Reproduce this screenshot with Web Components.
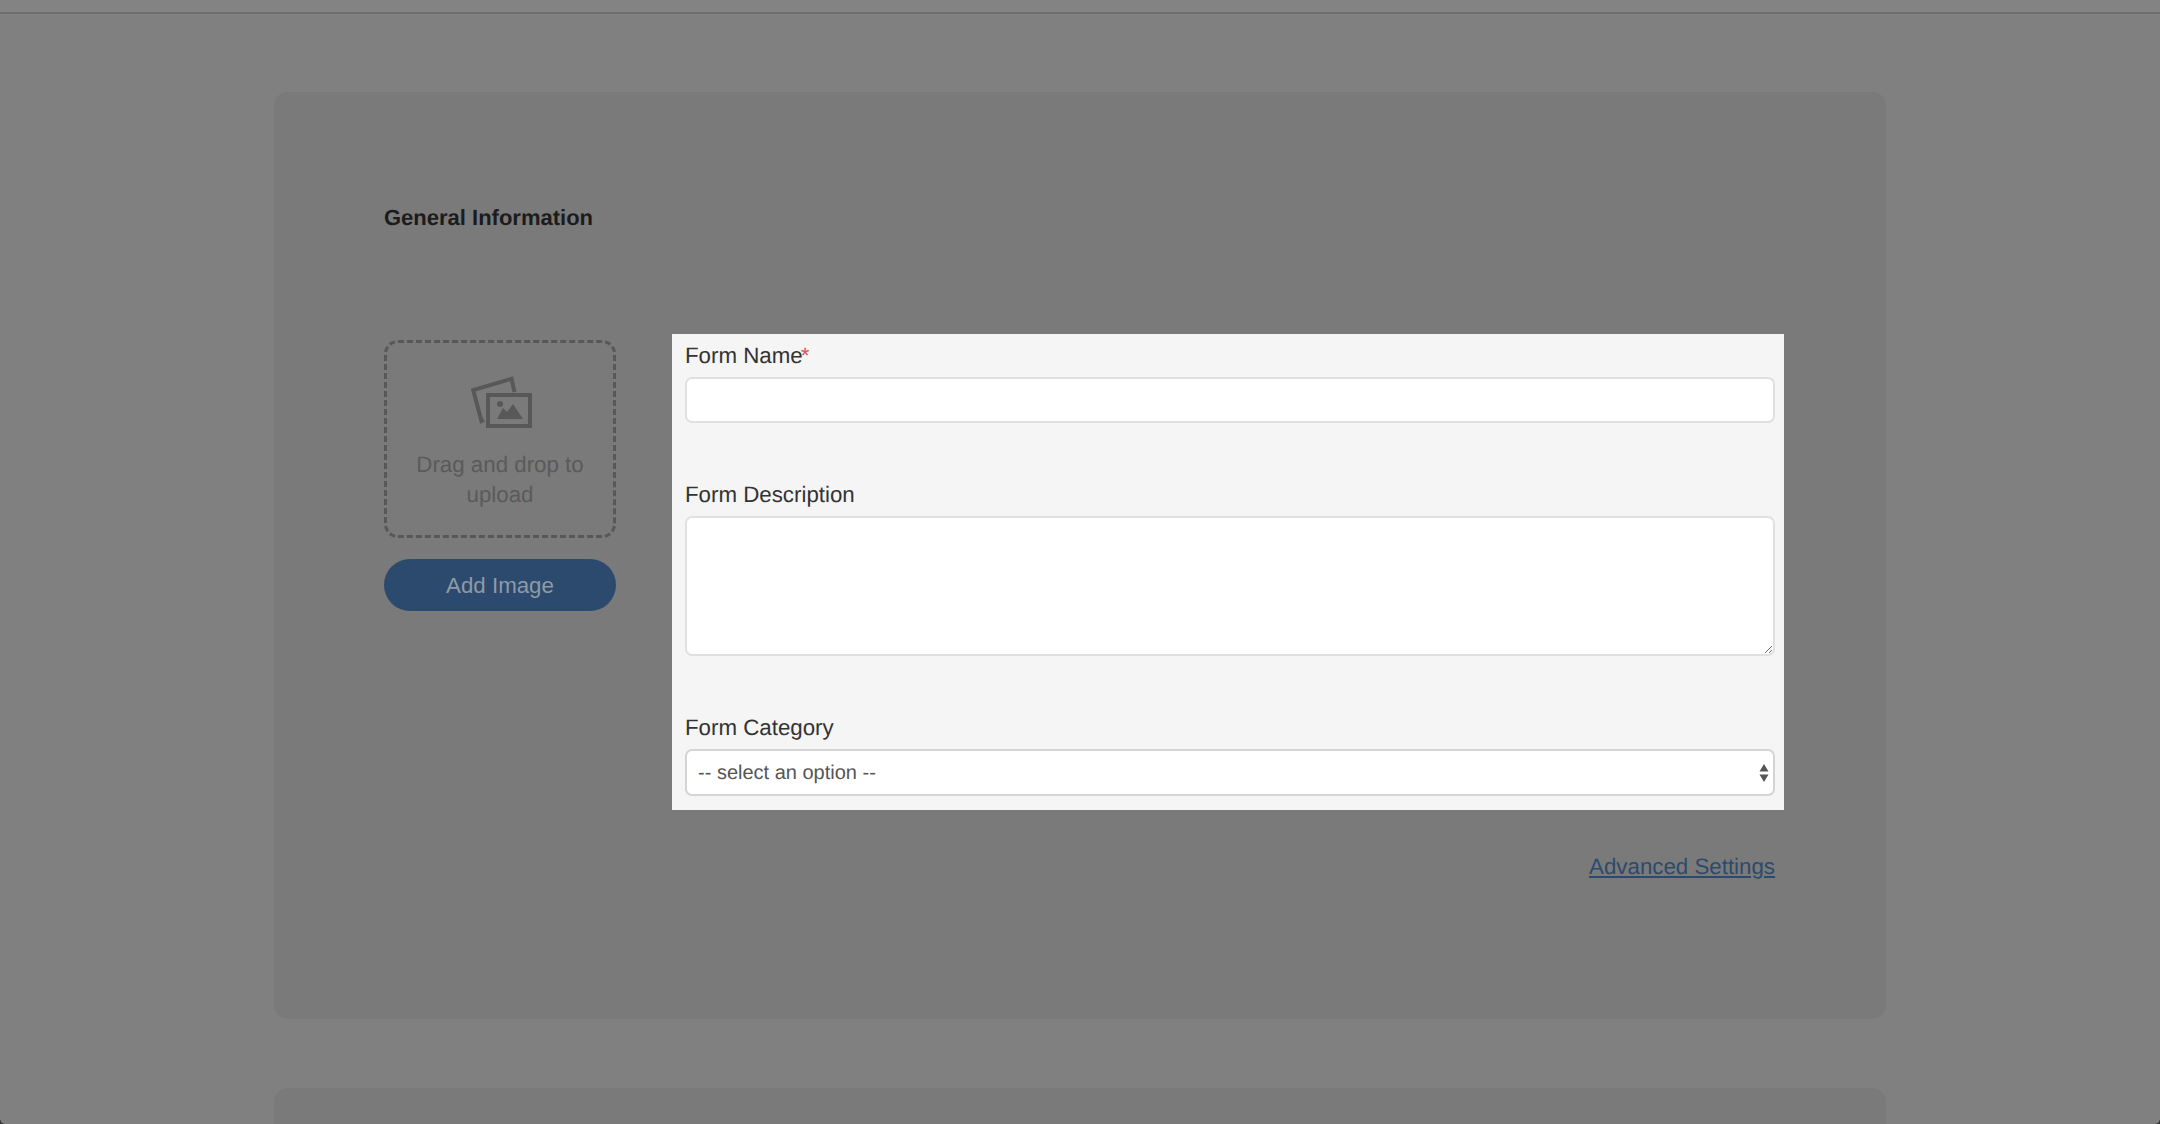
<!DOCTYPE html>
<html lang="en">
<head>
<meta charset="utf-8">
<title>General Information</title>
<style>
    html, body {
        margin: 0;
        height: 100%;
        overflow: hidden;
        background-color: #808080;
        font-family: "Liberation Sans", Arial, sans-serif;
        text-rendering: geometricPrecision;
    }
</style>
</head>
<body>
<app-page>
    <form-card>
        <h-title slot="title">General Information</h-title>
        <image-drop slot="aside"></image-drop>
        <form-panel slot="main">
            <form-field label="Form Name" required kind="input"></form-field>
            <form-field label="Form Description" kind="textarea"></form-field>
            <form-field label="Form Category" kind="select"></form-field>
        </form-panel>
        <a-link slot="footer">Advanced Settings</a-link>
    </form-card>
    <form-card empty></form-card>
</app-page>

<script>
class AppPage extends HTMLElement {
    constructor() {
        super();
        this.attachShadow({ mode: 'open' });
    }

    connectedCallback() {
        this.shadowRoot.innerHTML = `
            <style>
                :host {
                    display: block;
                    position: relative;
                    height: 1124px;
                    overflow: hidden;
                }
                header {
                    height: 12px;
                    border-bottom: 2px solid #6e6e6e;
                    background-color: #838383;
                }
                main {
                    display: flex;
                    flex-direction: column;
                    align-items: center;
                    gap: 69px;
                    padding-top: 78px;
                }
                /* window corners at the bottom */
                :host::before,
                :host::after {
                    content: '';
                    position: absolute;
                    bottom: 0;
                    width: 4px;
                    height: 4px;
                }
                :host::before {
                    left: 0;
                    background: radial-gradient(circle at 100% 0, transparent 3px, #333 4px);
                }
                :host::after {
                    right: 0;
                    background: radial-gradient(circle at 0 0, transparent 3px, #333 4px);
                }
            </style>
            <header></header>
            <main><slot></slot></main>
        `;
    }
}

class FormCard extends HTMLElement {
    constructor() {
        super();
        this.attachShadow({ mode: 'open' });
    }

    connectedCallback() {
        this.shadowRoot.innerHTML = `
            <style>
                :host {
                    display: block;
                    box-sizing: border-box;
                    width: 1612px;
                    height: 927px;
                    padding: 113px 102px 0 110px;
                    border-radius: 14px;
                    background-color: #7a7a7a;
                }
                .row {
                    display: flex;
                    gap: 56px;
                    margin-top: 103px;
                }
                .aside {
                    width: 232px;
                    padding-top: 6px;
                }
                .footer {
                    display: flex;
                    justify-content: flex-end;
                    padding: 43px 9px 0 0;
                }
            </style>
            <slot name="title"></slot>
            <div class="row">
                <div class="aside"><slot name="aside"></slot></div>
                <slot name="main"></slot>
            </div>
            <div class="footer"><slot name="footer"></slot></div>
        `;
    }
}

class HTitle extends HTMLElement {
    constructor() {
        super();
        this.attachShadow({ mode: 'open' });
    }

    connectedCallback() {
        this.shadowRoot.innerHTML = `
            <style>
                :host {
                    display: block;
                    font-size: 22px;
                    line-height: 26px;
                    font-weight: 700;
                    color: #1c1c1c;
                }
            </style>
            <slot></slot>
        `;
    }
}

class ImageDrop extends HTMLElement {
    constructor() {
        super();
        this.attachShadow({ mode: 'open' });
    }

    connectedCallback() {
        this.shadowRoot.innerHTML = `
            <style>
                :host {
                    display: flex;
                    flex-direction: column;
                    gap: 21px;
                }
                .zone {
                    box-sizing: border-box;
                    height: 198px;
                    padding-top: 32px;
                    border: 3px dashed #585858;
                    border-radius: 14px;
                    text-align: center;
                    font-size: 22.3px;
                    line-height: 30px;
                    color: #5a5a5a;
                }
                svg {
                    display: block;
                    margin: 0 auto 19px;
                    transform: translateX(2px);
                }
                button {
                    height: 52px;
                    border: none;
                    border-radius: 26px;
                    background-color: #2b4a6e;
                    color: #8f9aa7;
                    font: inherit;
                    font-size: 22.3px;
                    padding-top: 2px;
                }
            </style>
            <div class="zone">
                <svg width="64" height="56" viewBox="0 0 64 56">
                    <path d="M14 45 L11.5 46 L3.2 15 L41.5 3.8 L44.5 17" fill="none" stroke="#585858" stroke-width="4"/>
                    <rect x="18" y="20" width="42" height="31" fill="none" stroke="#585858" stroke-width="4"/>
                    <circle cx="30" cy="29" r="3" fill="#585858"/>
                    <path d="M27 44 L33 33 L37 37 L43 29 L53 44 Z" fill="#585858"/>
                </svg>
                Drag and drop to upload
            </div>
            <button type="button">Add Image</button>
        `;
    }
}

class FormPanel extends HTMLElement {
    constructor() {
        super();
        this.attachShadow({ mode: 'open' });
    }

    connectedCallback() {
        this.shadowRoot.innerHTML = `
            <style>
                :host {
                    display: flex;
                    flex-direction: column;
                    gap: 59px;
                    box-sizing: border-box;
                    width: 1112px;
                    height: 476px;
                    padding: 9px 9px 0 13px;
                    background-color: #f5f5f5;
                }
            </style>
            <slot></slot>
        `;
    }
}

class FormField extends HTMLElement {
    constructor() {
        super();
        this.attachShadow({ mode: 'open' });
    }

    connectedCallback() {
        const kind = this.getAttribute('kind');
        const star = this.hasAttribute('required') ? '<span class="req">*</span>' : '';
        let control = '<input type="text">';
        if (kind === 'textarea') {
            control = '<textarea></textarea>';
        }
        if (kind === 'select') {
            control = `
                <div class="sel">
                    <select><option>-- select an option --</option></select>
                    <svg width="10" height="18" viewBox="0 0 10 18">
                        <path d="M5 0 L9.5 7.5 L0.5 7.5 Z M0.5 10.5 L9.5 10.5 L5 18 Z" fill="#555"/>
                    </svg>
                </div>`;
        }
        this.shadowRoot.innerHTML = `
            <style>
                :host {
                    display: block;
                    font-size: 22.3px;
                    color: #333;
                }
                label {
                    display: block;
                    line-height: 26px;
                    margin-bottom: 8px;
                }
                .req {
                    margin-left: -2px;
                    color: #d9534f;
                }
                input, textarea, select {
                    display: block;
                    box-sizing: border-box;
                    width: 100%;
                    margin: 0;
                    border: 2px solid #e0e0e0;
                    border-radius: 7px;
                    background-color: #fff;
                    outline: none;
                    font-family: inherit;
                }
                input {
                    height: 46px;
                }
                textarea {
                    height: 140px;
                    resize: vertical;
                }
                .sel {
                    position: relative;
                }
                select {
                    height: 47px;
                    padding: 0 11px;
                    appearance: none;
                    border-color: #d4d4d4;
                    font-size: 20px;
                    color: #555;
                    text-rendering: geometricPrecision;
                }
                .sel svg {
                    position: absolute;
                    right: 6px;
                    top: 15px;
                }
            </style>
            <label>${this.getAttribute('label')}${star}</label>
            ${control}
        `;
    }
}

class ALink extends HTMLElement {
    constructor() {
        super();
        this.attachShadow({ mode: 'open' });
    }

    connectedCallback() {
        this.shadowRoot.innerHTML = `
            <style>
                :host {
                    display: inline-block;
                    font-size: 22.3px;
                    line-height: 28px;
                    color: #2b4a6e;
                    text-decoration: underline;
                }
            </style>
            <slot></slot>
        `;
    }
}

customElements.define('app-page', AppPage);
customElements.define('form-card', FormCard);
customElements.define('h-title', HTitle);
customElements.define('image-drop', ImageDrop);
customElements.define('form-panel', FormPanel);
customElements.define('form-field', FormField);
customElements.define('a-link', ALink);
</script>
</body>
</html>
